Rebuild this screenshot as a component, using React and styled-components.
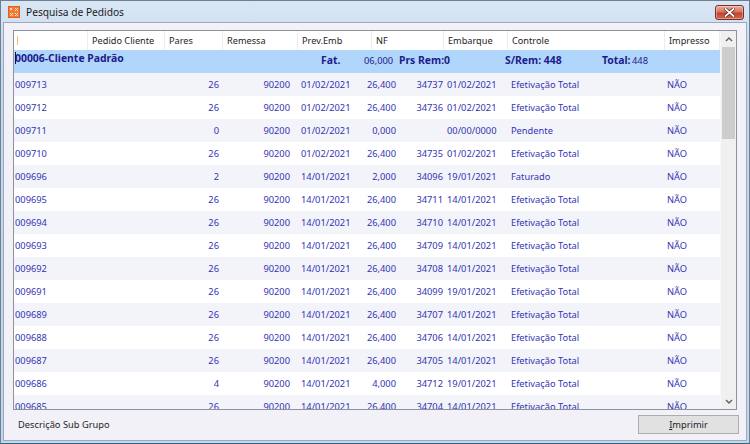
import React from "react";
import styled, { createGlobalStyle } from "styled-components";

const Global = createGlobalStyle`
  html, body { margin: 0; padding: 0; background: #ffffff; }
  body { font-family: "Noto Sans", "Liberation Sans", sans-serif; }
  * { box-sizing: border-box; }
`;

const Window = styled.div`
  width: 750px;
  height: 444px;
  background: linear-gradient(#d9e6f4, #c6d8ee 60px, #c4d6ec);
  border: 1px solid #6e7f93;
  border-bottom-color: #2f6a7c;
  padding: 0 2px 2px 2px;
  display: flex;
  flex-direction: column;
`;

const TitleBar = styled.div`
  height: 21px;
  display: flex;
  align-items: center;
  padding-left: 5px;
  gap: 6px;
`;

const Title = styled.span`
  font-size: 10.2px;
  color: #1a1a1a;
  flex: 1;
`;

const CloseBtn = styled.div`
  width: 29px;
  height: 15px;
  margin: 2px 3px 0 0;
  border: 1px solid #7a2f26;
  border-radius: 3px;
  background: linear-gradient(#eab0a2, #d9735f 45%, #c2432f 55%, #cf6a4f);
  display: flex;
  align-items: center;
  justify-content: center;
  box-shadow: inset 0 0 0 1px rgba(255, 255, 255, 0.35);
`;

const Client = styled.div`
  flex: 1;
  background: #f1f1f7;
  border: 1px solid #9aa9bd;
  padding: 7px 9px 0 9px;
  display: flex;
  flex-direction: column;
`;

const Grid = styled.div`
  height: 380px;
  border: 1px solid #8c939c;
  background: #ffffff;
  display: flex;
  overflow: hidden;
`;

const GridBody = styled.div`
  width: 706px;
  display: flex;
  flex-direction: column;
  overflow: hidden;
`;

const HeaderRow = styled.div`
  height: 19px;
  display: grid;
  grid-template-columns: 74px 77px 58px 75px 74px 72px 64px 157px 55px;
  background: #ffffff;
  flex-shrink: 0;
`;

const HeaderCell = styled.div`
  font-size: 9.2px;
  color: #1e1e1e;
  padding-left: 3px;
  display: flex;
  align-items: center;
  border-right: 1px solid #ececec;
  border-left: 1px solid #ffffff;
  position: relative;
  white-space: nowrap;
`;

const Marker = styled.span`
  position: absolute;
  left: 2px;
  top: 5px;
  width: 1px;
  height: 9px;
  background: #f0c36a;
`;

const GroupRow = styled.div`
  height: 23px;
  flex-shrink: 0;
  background: #b1d6fb;
  display: grid;
  grid-template-columns: 307px 43px 35px 106px 97px 30px 1fr;
  color: #1c1c8c;
  position: relative;
`;

const Caret = styled.span`
  position: absolute;
  left: 1px;
  top: 2px;
  width: 1px;
  height: 12px;
  background: #10104a;
`;

const GroupName = styled.div`
  font-size: 10.4px;
  font-weight: 700;
  padding-left: 1px;
  padding-top: 1px;
  white-space: nowrap;
`;

const GroupVal = styled.div`
  font-size: ${(p) => (p.$bold ? "10.4px" : "9.3px")};
  font-weight: ${(p) => (p.$bold ? 700 : 400)};
  padding-top: ${(p) => (p.$bold ? "3px" : "4px")};
  white-space: nowrap;
`;

const DataRow = styled.div`
  height: 23px;
  flex-shrink: 0;
  display: grid;
  grid-template-columns: 136px 71px 71px 66px 40px 47px 63px 157px 55px;
  background: ${(p) => (p.$alt ? "#f3f3fa" : "#ffffff")};
  color: #3434b4;
  font-size: 9.3px;
  align-items: center;
`;

const Cell = styled.div`
  white-space: nowrap;
  text-align: ${(p) => (p.$right ? "right" : "left")};
  padding-left: ${(p) => p.$pl || 0}px;
  padding-right: ${(p) => p.$pr || 0}px;
`;

const ScrollBar = styled.div`
  width: 16px;
  background: #f0f0f0;
  display: flex;
  flex-direction: column;
  border-left: 1px solid #f7f7f7;
`;

const ArrowBox = styled.div`
  height: 16px;
  display: flex;
  align-items: center;
  justify-content: center;
  flex-shrink: 0;
`;

const Thumb = styled.div`
  height: 92px;
  margin: 0 1px;
  background: #cdcdcd;
  flex-shrink: 0;
`;

const Track = styled.div`
  flex: 1;
`;

const BottomBar = styled.div`
  flex: 1;
  display: flex;
  align-items: flex-start;
  justify-content: space-between;
  padding-top: 5px;
`;

const Label = styled.span`
  font-size: 9.3px;
  color: #1e1e1e;
  padding-left: 5px;
  padding-top: 3px;
`;

const Button = styled.button`
  width: 101px;
  height: 19px;
  margin-right: -2px;
  background: #e1e1e1;
  border: 1px solid #adadad;
  font-family: "Noto Sans", "Liberation Sans", sans-serif;
  font-size: 9.3px;
  color: #1e1e1e;
  padding: 0;
  u { text-decoration: underline; }
`;

const rows = [
  ["009713", "26", "90200", "01/02/2021", "26,400", "34737", "01/02/2021", "Efetivação Total"],
  ["009712", "26", "90200", "01/02/2021", "26,400", "34736", "01/02/2021", "Efetivação Total"],
  ["009711", "0", "90200", "01/02/2021", "0,000", "", "00/00/0000", "Pendente"],
  ["009710", "26", "90200", "01/02/2021", "26,400", "34735", "01/02/2021", "Efetivação Total"],
  ["009696", "2", "90200", "14/01/2021", "2,000", "34096", "19/01/2021", "Faturado"],
  ["009695", "26", "90200", "14/01/2021", "26,400", "34711", "14/01/2021", "Efetivação Total"],
  ["009694", "26", "90200", "14/01/2021", "26,400", "34710", "14/01/2021", "Efetivação Total"],
  ["009693", "26", "90200", "14/01/2021", "26,400", "34709", "14/01/2021", "Efetivação Total"],
  ["009692", "26", "90200", "14/01/2021", "26,400", "34708", "14/01/2021", "Efetivação Total"],
  ["009691", "26", "90200", "14/01/2021", "26,400", "34099", "19/01/2021", "Efetivação Total"],
  ["009689", "26", "90200", "14/01/2021", "26,400", "34707", "14/01/2021", "Efetivação Total"],
  ["009688", "26", "90200", "14/01/2021", "26,400", "34706", "14/01/2021", "Efetivação Total"],
  ["009687", "26", "90200", "14/01/2021", "26,400", "34705", "14/01/2021", "Efetivação Total"],
  ["009686", "4", "90200", "14/01/2021", "4,000", "34712", "19/01/2021", "Efetivação Total"],
  ["009685", "26", "90200", "14/01/2021", "26,400", "34704", "14/01/2021", "Efetivação Total"],
];

const headers = ["", "Pedido Cliente", "Pares", "Remessa", "Prev.Emb", "NF", "Embarque", "Controle", "Impresso"];

function AppIcon() {
  return (
    <svg width="12" height="12" viewBox="0 0 12 12">
      <rect x="0" y="0" width="12" height="12" fill="#f07b35" />
      <path d="M2 2l2 2M4 2L2 4M7 2l3 3M10 2L7 5M2 7l3 3M5 7l-3 3M7 7l3 3M10 7l-3 3" stroke="#fde2c8" strokeWidth="1" />
      <rect x="0.5" y="0.5" width="11" height="11" fill="none" stroke="#e06020" />
    </svg>
  );
}

function CloseIcon() {
  return (
    <svg width="11" height="9" viewBox="0 0 11 9">
      <path d="M1.5 1l8 7M9.5 1l-8 7" stroke="#5a1a12" strokeWidth="3.2" strokeLinecap="square" />
      <path d="M1.5 1l8 7M9.5 1l-8 7" stroke="#ffffff" strokeWidth="1.8" strokeLinecap="square" />
    </svg>
  );
}

function Chevron({ down }) {
  return (
    <svg width="8" height="5" viewBox="0 0 8 5">
      <path d={down ? "M1 1l3 3 3-3" : "M1 4l3-3 3 3"} stroke="#606060" strokeWidth="1.4" fill="none" />
    </svg>
  );
}

export default function App() {
  return (
    <>
      <Global />
      <Window>
        <TitleBar>
          <AppIcon />
          <Title>Pesquisa de Pedidos</Title>
          <CloseBtn>
            <CloseIcon />
          </CloseBtn>
        </TitleBar>
        <Client>
          <Grid>
            <GridBody>
              <HeaderRow>
                {headers.map((h, i) => (
                  <HeaderCell key={i}>
                    {i === 0 && <Marker />}
                    {h}
                  </HeaderCell>
                ))}
              </HeaderRow>
              <GroupRow>
                <Caret />
                <GroupName>00006-Cliente Padrão</GroupName>
                <GroupVal $bold>Fat.</GroupVal>
                <GroupVal>06,000</GroupVal>
                <GroupVal $bold>Prs Rem:0</GroupVal>
                <GroupVal $bold>S/Rem: 448</GroupVal>
                <GroupVal $bold>Total:</GroupVal>
                <GroupVal>448</GroupVal>
              </GroupRow>
              {rows.map((r, i) => (
                <DataRow key={r[0]} $alt={i % 2 === 0}>
                  <Cell $pl={1}>{r[0]}</Cell>
                  <Cell $right $pr={2}>{r[1]}</Cell>
                  <Cell $right $pr={2}>{r[2]}</Cell>
                  <Cell $pl={9}>{r[3]}</Cell>
                  <Cell $right $pr={2}>{r[4]}</Cell>
                  <Cell $right $pr={2}>{r[5]}</Cell>
                  <Cell $pl={2}>{r[6]}</Cell>
                  <Cell $pl={3}>{r[7]}</Cell>
                  <Cell $pl={2}>NÃO</Cell>
                </DataRow>
              ))}
            </GridBody>
            <ScrollBar>
              <ArrowBox>
                <Chevron />
              </ArrowBox>
              <Thumb />
              <Track />
              <ArrowBox>
                <Chevron down />
              </ArrowBox>
            </ScrollBar>
          </Grid>
          <BottomBar>
            <Label>Descrição Sub Grupo</Label>
            <Button>
              <u>I</u>mprimir
            </Button>
          </BottomBar>
        </Client>
      </Window>
    </>
  );
}
